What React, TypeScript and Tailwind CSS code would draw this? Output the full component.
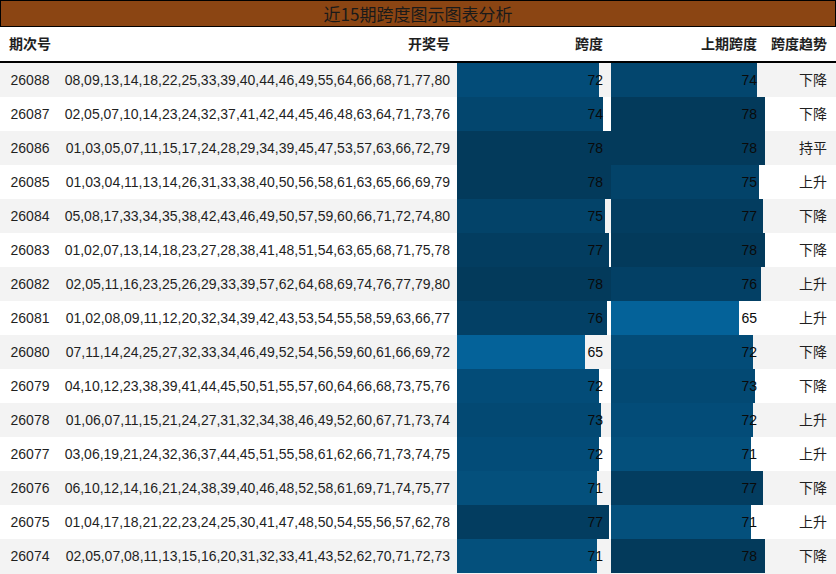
import React from "react";

type Row = { id: string; nums: string; span: number; prev: number; trend: string };

const rows: Row[] = [
  { id: "26088", nums: "08,09,13,14,18,22,25,33,39,40,44,46,49,55,64,66,68,71,77,80", span: 72, prev: 74, trend: "下降" },
  { id: "26087", nums: "02,05,07,10,14,23,24,32,37,41,42,44,45,46,48,63,64,71,73,76", span: 74, prev: 78, trend: "下降" },
  { id: "26086", nums: "01,03,05,07,11,15,17,24,28,29,34,39,45,47,53,57,63,66,72,79", span: 78, prev: 78, trend: "持平" },
  { id: "26085", nums: "01,03,04,11,13,14,26,31,33,38,40,50,56,58,61,63,65,66,69,79", span: 78, prev: 75, trend: "上升" },
  { id: "26084", nums: "05,08,17,33,34,35,38,42,43,46,49,50,57,59,60,66,71,72,74,80", span: 75, prev: 77, trend: "下降" },
  { id: "26083", nums: "01,02,07,13,14,18,23,27,28,38,41,48,51,54,63,65,68,71,75,78", span: 77, prev: 78, trend: "下降" },
  { id: "26082", nums: "02,05,11,16,23,25,26,29,33,39,57,62,64,68,69,74,76,77,79,80", span: 78, prev: 76, trend: "上升" },
  { id: "26081", nums: "01,02,08,09,11,12,20,32,34,39,42,43,53,54,55,58,59,63,66,77", span: 76, prev: 65, trend: "上升" },
  { id: "26080", nums: "07,11,14,24,25,27,32,33,34,46,49,52,54,56,59,60,61,66,69,72", span: 65, prev: 72, trend: "下降" },
  { id: "26079", nums: "04,10,12,23,38,39,41,44,45,50,51,55,57,60,64,66,68,73,75,76", span: 72, prev: 73, trend: "下降" },
  { id: "26078", nums: "01,06,07,11,15,21,24,27,31,32,34,38,46,49,52,60,67,71,73,74", span: 73, prev: 72, trend: "上升" },
  { id: "26077", nums: "03,06,19,21,24,32,36,37,44,45,51,55,58,61,62,66,71,73,74,75", span: 72, prev: 71, trend: "上升" },
  { id: "26076", nums: "06,10,12,14,16,21,24,38,39,40,46,48,52,58,61,69,71,74,75,77", span: 71, prev: 77, trend: "下降" },
  { id: "26075", nums: "01,04,17,18,21,22,23,24,25,30,41,47,48,50,54,55,56,57,62,78", span: 77, prev: 71, trend: "上升" },
  { id: "26074", nums: "02,05,07,08,11,13,15,16,20,31,32,33,41,43,52,62,70,71,72,73", span: 71, prev: 78, trend: "下降" },
];

const MIN = 65;
const MAX = 78;
const CELL = 154;

function barColor(v: number) {
  const t = (v - MIN) / (MAX - MIN);
  const a = [4, 98, 153];
  const b = [3, 58, 91];
  const c = a.map((x, i) => Math.round(x + (b[i] - x) * t));
  return `rgb(${c[0]},${c[1]},${c[2]})`;
}

function BarCell({ v }: { v: number }) {
  return (
    <div className="relative w-[154px] h-full flex items-center justify-end pr-2">
      <div
        className="absolute left-0 top-0 bottom-0"
        style={{ width: `${(v / MAX) * CELL}px`, backgroundColor: barColor(v) }}
      />
      <span className="relative text-[#0a0a0a]">{v}</span>
    </div>
  );
}

export default function App() {
  return (
    <div
      className="w-[836px] h-[574px] overflow-hidden bg-[#f3f3f3] text-[#1f1f1f] text-[14px]"
      style={{ fontFamily: '"Liberation Sans", "Noto Sans CJK SC", sans-serif' }}
    >
      <div
        className="h-[27px] border border-black bg-[#8b4513] flex items-center justify-center text-[17px] text-[#1a1a1a]"
        style={{ fontFamily: '"Noto Sans CJK SC", sans-serif' }}
      >
        近15期跨度图示图表分析
      </div>
      <div className="h-[36px] border-b-2 border-black bg-white flex items-center font-bold">
        <div className="w-[60px] text-center">期次号</div>
        <div className="w-[397px] text-right pr-[7px]">开奖号</div>
        <div className="w-[154px] text-right pr-2">跨度</div>
        <div className="w-[154px] text-right pr-2">上期跨度</div>
        <div className="w-[71px] text-right pr-[9px]">跨度趋势</div>
      </div>
      {rows.map((r, i) => (
        <div
          key={r.id}
          className={`h-[34px] flex items-center ${i % 2 === 0 ? "bg-[#f3f3f3]" : "bg-white"}`}
        >
          <div className="w-[60px] text-center">{r.id}</div>
          <div className="w-[397px] text-right pr-[7px]">{r.nums}</div>
          <BarCell v={r.span} />
          <BarCell v={r.prev} />
          <div className="w-[71px] text-right pr-[9px]">{r.trend}</div>
        </div>
      ))}
    </div>
  );
}
